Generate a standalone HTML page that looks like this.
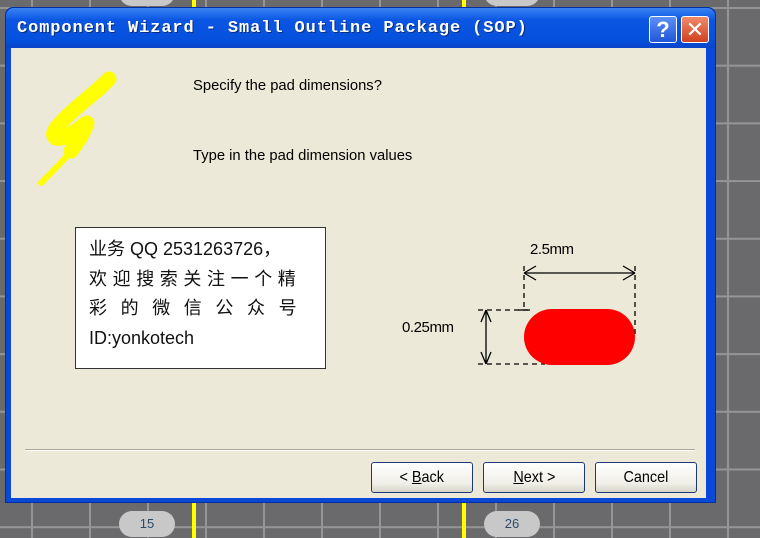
<!DOCTYPE html>
<html><head><style>
*{margin:0;padding:0;box-sizing:border-box}
body{width:760px;height:538px;overflow:hidden;position:relative;background:#6a6a6c;font-family:"Liberation Sans",sans-serif}
.grid{position:absolute;inset:0;background-image:linear-gradient(to right,#959595 2px,transparent 2px),linear-gradient(to bottom,#959595 2px,transparent 2px);background-size:58px 57.7px;background-position:31px 7px}
.yl{position:absolute;top:0;width:4px;height:538px;background:#ffff00}
.pad{position:absolute;width:56px;height:26px;border-radius:13px;background:#c8c8c8;color:#2a4a6a;font-size:13px;text-align:center;line-height:26px}
.win{position:absolute;left:5px;top:7px;width:711px;height:496px;background:#0a48d8;border-radius:8px 8px 0 0;border:1px solid #0030a0}
.tb{position:absolute;left:0;top:0;right:0;height:40px;border-radius:8px 8px 0 0;background:linear-gradient(#3a84f4,#0a56e2 30%,#0550dc 80%,#0a44c8)}
.title{position:absolute;left:11px;top:11px;color:#fff;font:bold 17px "Liberation Mono",monospace;letter-spacing:0.9px;text-shadow:1px 1px #0a2a80}
.client{position:absolute;left:5px;top:40px;width:695px;height:450px;background:#ece9d8}
.btn{position:absolute;top:414px;height:31px;width:102px;border:1px solid #1c3a78;border-radius:3px;background:linear-gradient(#fff,#f0efe8 70%,#d8d5c8);font-size:16px;text-align:center;line-height:29px;color:#000}
.btn span{display:inline-block;transform:scaleX(.9)}
.t{position:absolute;font-size:15px;color:#000;transform:scaleX(.985);transform-origin:left}
.box{position:absolute;left:64px;top:179px;width:251px;height:142px;background:#fff;border:1px solid #333;font-family:"Liberation Sans","Noto Sans CJK SC",sans-serif;font-size:18px;line-height:29.5px;padding:7px 0 0 13px;color:#111}
</style></head><body>
<div class="grid"></div>
<div class="yl" style="left:192px"></div>
<div class="yl" style="left:462px"></div>
<div class="pad" style="left:119px;top:-20px"></div>
<div class="pad" style="left:484px;top:-20px"></div>
<div class="pad" style="left:119px;top:511px">15</div>
<div class="pad" style="left:484px;top:511px">26</div>
<div class="win">
 <div class="tb"></div>
 <div class="title">Component Wizard - Small Outline Package (SOP)</div>
 <div style="position:absolute;left:643px;top:8px;width:28px;height:27px;border:1px solid #fff;border-radius:3px;background:linear-gradient(#5d8ff8,#2056d8);color:#fff;font:bold 22px 'Liberation Sans';text-align:center;line-height:25px">?</div>
 <div style="position:absolute;left:675px;top:8px;width:28px;height:27px;border:1px solid #fff;border-radius:3px;background:linear-gradient(#f08a6a,#d04020);color:#fff;font:22px 'Liberation Sans';text-align:center;line-height:25px">✕</div>
 <div class="client">
  <svg style="position:absolute;left:20px;top:15px" width="90" height="125" viewBox="0 0 90 125" fill="none" stroke="#ffff00" stroke-linecap="round" stroke-linejoin="round">
   <path d="M78 16 L70 24 C56 36 38 50 26 64 C20 72 22 78 34 74 C44 70 52 62 56 60 C52 72 46 80 40 88" stroke-width="15"/>
   <path d="M44 84 C34 96 22 108 10 120" stroke-width="6"/>
  </svg>
  <div class="t" style="left:182px;top:29px">Specify the pad dimensions?</div>
  <div class="t" style="left:182px;top:99px">Type in the pad dimension values</div>
  <div class="box">业务 QQ 2531263726，<br><span style="letter-spacing:5.6px">欢迎搜索关注一个精</span><br><span style="letter-spacing:13.6px">彩的微信公众号</span><br>ID:yonkotech</div>
  <svg style="position:absolute;left:-6px;top:0" width="700" height="450">
   <g stroke="#000" stroke-width="1.3" fill="none">
    <path d="M519 225 H630 M519 225 l12 -7 M519 225 l12 7 M630 225 l-12 -7 M630 225 l-12 7"/>
    <path d="M481 262 V316 M481 262 l-5 12 M481 262 l5 12 M481 316 l-5 -12 M481 316 l5 -12"/>
    <path d="M519 218 V262 M630 218 V290 M473 262 H525 M473 316 H540" stroke-dasharray="5 4"/>
    <path d="M513 262 H525"/>
   </g>
   <rect x="519" y="261" width="111" height="56" rx="28" fill="#ff0000"/>
   <text x="525" y="206" font-family="Liberation Sans" font-size="15" textLength="44">2.5mm</text>
   <text x="397" y="284" font-family="Liberation Sans" font-size="15" textLength="52">0.25mm</text>
  </svg>
  <div style="position:absolute;left:14px;top:401px;width:670px;height:2px;border-top:1px solid #aca899;border-bottom:1px solid #fff"></div>
  <div class="btn" style="left:360px"><span>&lt; <u>B</u>ack</span></div>
  <div class="btn" style="left:472px"><span><u>N</u>ext &gt;</span></div>
  <div class="btn" style="left:584px"><span>Cancel</span></div>
 </div>
</div>
</body></html>
